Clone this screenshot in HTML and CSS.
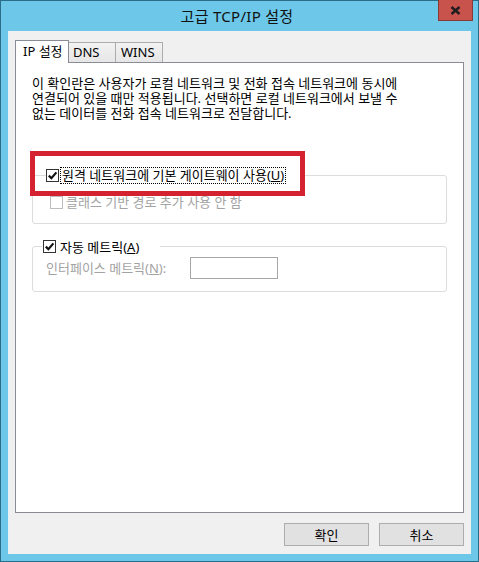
FILE: index.html
```html
<!DOCTYPE html>
<html lang="ko">
<head>
    <meta charset="UTF-8">
    <title>고급 TCP/IP 설정</title>
    <link rel="stylesheet" href="styles.css">
</head>
<body>
    <div class="window">
        <div class="titlebar">
            <span></span>
            <div class="title">고급 TCP/IP 설정</div>
            <button class="close" aria-label="닫기">
                <svg width="11" height="9" viewBox="0 0 11 9">
                    <path d="M1.5 1 L9.5 8 M9.5 1 L1.5 8" stroke="#1e1e1e" stroke-width="2.4" fill="none"/>
                </svg>
            </button>
        </div>
        <div class="client">
            <div class="tabs">
                <div class="tab active">IP 설정</div>
                <div class="tab">DNS</div>
                <div class="tab">WINS</div>
            </div>
            <div class="panel">
                <p class="desc">
                    이 확인란은 사용자가 로컬 네트워크 및 전화 접속 네트워크에 동시에<br>
                    연결되어 있을 때만 적용됩니다. 선택하면 로컬 네트워크에서 보낼 수<br>
                    없는 데이터를 전화 접속 네트워크로 전달합니다.
                </p>

                <div class="group group-gateway">
                    <div class="legend">
                        <span class="check on">
                            <svg width="11" height="11" viewBox="0 0 11 11">
                                <path d="M1.8 5.6 L4.4 8.2 L9.4 2.4" stroke="#111" stroke-width="2.2" fill="none"/>
                            </svg>
                        </span>
                        <span class="focus">원격 네트워크에 기본 게이트웨이 사용(<u>U</u>)</span>
                    </div>
                    <div class="row">
                        <span class="check off"></span>
                        <span class="muted">클래스 기반 경로 추가 사용 안 함</span>
                    </div>
                </div>

                <div class="group group-metric">
                    <div class="legend">
                        <span class="check on">
                            <svg width="11" height="11" viewBox="0 0 11 11">
                                <path d="M1.8 5.6 L4.4 8.2 L9.4 2.4" stroke="#111" stroke-width="2.2" fill="none"/>
                            </svg>
                        </span>
                        <span class="label">자동 메트릭(<u>A</u>)</span>
                    </div>
                    <div class="row metric-row">
                        <span class="muted metric-label">인터페이스 메트릭(<u>N</u>):</span>
                        <span class="textbox"></span>
                    </div>
                </div>

                <!-- 강조 표시 -->
                <div class="highlight"></div>
            </div>
            <div class="actions">
                <button class="button">확인</button>
                <button class="button">취소</button>
            </div>
        </div>
    </div>
</body>
</html>
```

FILE: styles.css
```css
body {
    margin: 0;
    font-family: "Noto Sans", "Noto Sans CJK KR", sans-serif;
    font-size: 13px;
    color: #000;
}
.window {
    width: 479px;
    height: 562px;
    box-sizing: border-box;
    border: 1px solid #2a6d88;
    background-color: #6cc7e8;
    display: flex;
    flex-direction: column;
}
.titlebar {
    height: 30px;
    display: grid;
    grid-template-columns: 1fr auto 1fr;
    padding-right: 5px;
}
.title {
    align-self: center;
    font-size: 15px;
    letter-spacing: 0.3px;
    color: #111;
    margin-top: -1px;
}
.close {
    justify-self: end;
    align-self: start;
    width: 35px;
    height: 21px;
    margin-top: -1px;
    padding: 0;
    border: 1px solid #8a3a36;
    border-top: none;
    background-color: #c8524c;
    display: flex;
    align-items: center;
    justify-content: center;
}
.client {
    flex: 1;
    margin: 0 7px 7px 7px;
    background-color: #f0f0f0;
    border-left: 1px solid #e4f1f7;
    padding: 9px 7px 8px 6px;
    display: flex;
    flex-direction: column;
}
.tabs {
    display: flex;
    align-items: flex-end;
    height: 22px;
}
.tab {
    box-sizing: border-box;
    width: 48px;
    height: 20px;
    line-height: 19px;
    border: 1px solid #acacac;
    border-bottom: none;
    background: linear-gradient(#f2f2f2, #e6e6e6);
    margin-left: -1px;
    white-space: nowrap;
}
.tab.active {
    width: 54px;
    height: 23px;
    line-height: 21px;
    margin-left: 0;
    margin-bottom: -1px;
    padding-left: 7px;
    background: #fff;
    border-color: #898c95;
    position: relative;
    z-index: 1;
}
.tab:nth-child(2) { padding-left: 4px; }
.tab:nth-child(3) { padding-left: 5px; }
.panel {
    flex: 1;
    background-color: #fff;
    border: 1px solid #898c95;
    padding: 13px 16px 0 16px;
    position: relative;
}
.desc {
    margin: 0;
    line-height: 15px;
    white-space: nowrap;
}
.group {
    border: 1px solid #dcdcdc;
    border-radius: 3px;
}
.legend {
    display: flex;
    align-items: center;
    height: 16px;
    margin-top: -9px;
    background-color: #fff;
    box-sizing: border-box;
    white-space: nowrap;
}
.check {
    width: 11px;
    height: 11px;
    border: 1px solid #333;
    background: #fff;
    display: inline-flex;
    flex-shrink: 0;
}
.check.off {
    border-color: #bcbcbc;
}
.group-gateway {
    margin-top: 54px;
    padding-bottom: 13px;
}
.group-gateway .legend {
    margin-left: 13px;
    width: 258px;
}
.group-gateway .focus {
    margin-left: 2px;
    padding: 0 1px;
    line-height: 15px;
    outline: 1px dotted #000;
}
.row {
    display: flex;
    align-items: center;
    line-height: 15px;
}
.group-gateway .row {
    margin-top: 12px;
    padding-left: 17px;
}
.group-gateway .row .muted {
    margin-left: 3px;
}
.muted {
    color: #a3a3a3;
}
.group-metric {
    margin-top: 22px;
    padding-bottom: 12px;
}
.group-metric .legend {
    margin-left: 9px;
    padding-left: 1px;
    width: 118px;
}
.group-metric .label {
    margin-left: 4px;
}
.metric-row {
    margin-top: 3px;
    padding-left: 13px;
}
.metric-label {
    width: 144px;
}
.textbox {
    width: 86px;
    height: 20px;
    border: 1px solid #a7a7a7;
    background: #fff;
}
.highlight {
    position: absolute;
    left: 14px;
    top: 88px;
    width: 265px;
    height: 35px;
    border: 5px solid #d42230;
}
.actions {
    display: flex;
    justify-content: flex-end;
    gap: 10px;
    margin-top: 10px;
}
.button {
    width: 85px;
    height: 23px;
    border: 1px solid #adadad;
    background-color: #e1e1e1;
    font-family: "Noto Sans", "Noto Sans CJK KR", sans-serif;
    font-size: 13px;
    color: #000;
    padding: 0;
}
```
